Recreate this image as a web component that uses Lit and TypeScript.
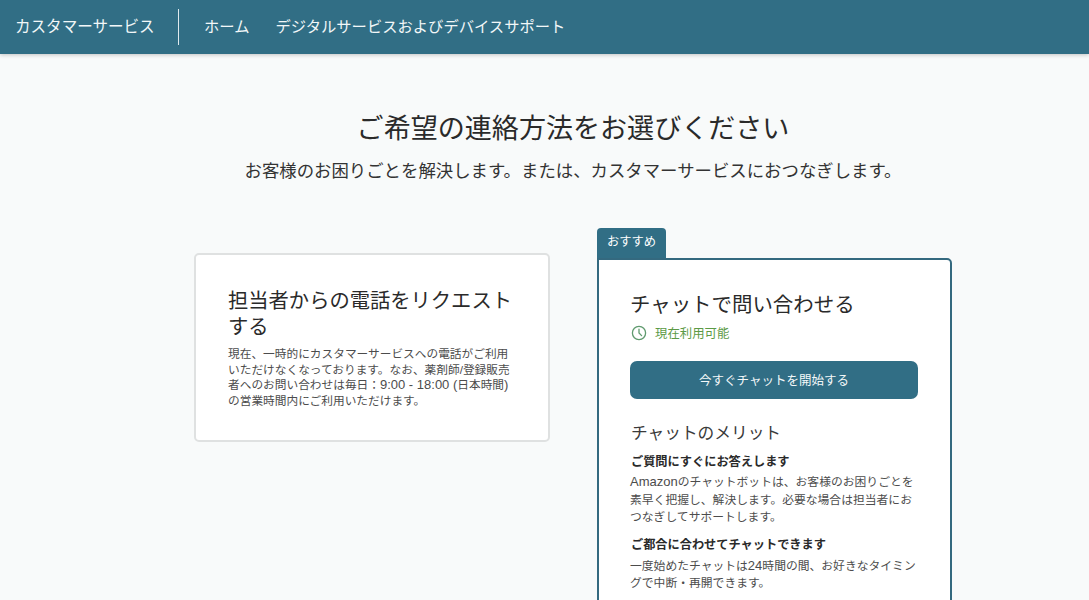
import { LitElement, html, css } from "lit";
import { customElement } from "lit/decorators.js";

@customElement("app-root")
export class AppRoot extends LitElement {
  static styles = css`
    :host {
      display: block;
      height: 600px;
      overflow: hidden;
      background: #f8fafa;
      color: #222;
      font-family: "Liberation Sans", "Noto Sans CJK JP", sans-serif;
    }
    .bar {
      height: 54px;
      background: #316e85;
      box-shadow: 0 1px 4px rgba(0, 0, 0, 0.22);
      display: flex;
      align-items: center;
      color: #f2f7f8;
      font-size: 15.3px;
      padding: 0 0 5px 15px;
      box-sizing: border-box;
      position: relative;
    }
    .brand { width: 139px; white-space: nowrap; font-size: 15.55px; }
    .divider { width: 1px; height: 36px; background: #dfeaee; margin: 5px 25px 0 24px; }
    .home { margin-right: 26px; white-space: nowrap; }
    .crumb { white-space: nowrap; }
    main { width: 758px; margin-left: 194px; }
    h1 {
      margin: 56px 0 0;
      font-size: 27.05px;
      font-weight: 400;
      line-height: 38px;
      text-align: center;
      white-space: nowrap;
      color: #2a2a2a;
    }
    .lead {
      margin: 11px 0 0;
      font-size: 17.4px;
      line-height: 24px;
      text-align: center;
      white-space: nowrap;
      color: #333;
    }
    .cards { display: flex; align-items: flex-start; gap: 47px; margin-top: 58px; }
    .col-left { width: 356px; padding-top: 12px; flex: none; }
    .col-right { width: 355px; flex: none; margin-top: -13px; }
    .card {
      box-sizing: border-box;
      background: #fff;
      border: 2px solid #dfe1e1;
      border-radius: 5px;
    }
    .phone { height: 189px; padding: 33px 32px 0; }
    h2 {
      margin: 0;
      font-size: 20.3px;
      line-height: 26px;
      font-weight: 400;
      color: #2a2a2a;
    }
    .phone p {
      margin: 6px 0 0;
      font-size: 11.7px;
      line-height: 15.6px;
      color: #4c4c4c;
    }
    .lat { display: inline-block; font-size: 13px; line-height: 13px; white-space: pre; }
    .tab {
      width: 69px;
      height: 30px;
      box-sizing: border-box;
      background: #316e85;
      color: #fff;
      border-radius: 4px 4px 0 0;
      font-size: 12.3px;
      line-height: 29px;
      text-align: center;
    }
    .chat {
      border-color: #34697f;
      border-radius: 0 5px 5px 5px;
      padding: 32px 32px 40px;
      height: 400px;
    }
    .chat h2 { margin-left: -1px; font-size: 20.45px; }
    .status {
      display: flex;
      align-items: center;
      gap: 8px;
      margin-top: 6px;
      height: 18px;
      font-size: 12.4px;
      color: #5c9a46;
    }
    .status svg { display: block; flex: none; }
    .cta {
      display: block;
      box-sizing: border-box;
      width: 288px;
      height: 38px;
      margin: 19px 0 0 -1px;
      padding: 0 0 2px;
      border: 0;
      border-radius: 7px;
      background: #316e85;
      color: #f4f8f9;
      font: inherit;
      font-size: 12.5px;
      text-align: center;
    }
    h3 {
      margin: 24px 0 0;
      font-size: 16.7px;
      line-height: 22px;
      font-weight: 400;
      color: #3a3a3a;
    }
    h4 {
      margin: 8px 0 0;
      font-size: 12.2px;
      line-height: 18px;
      font-weight: 700;
      color: #2a2a2a;
    }
    h4.next { margin-top: 9px; }
    .body {
      margin: 3px 0 0 -1px;
      font-size: 11.8px;
      line-height: 17.6px;
      color: #4c4c4c;
    }
    .next + .body { margin-top: 4px; }
  `;

  render() {
    return html`
      <div class="bar">
        <span class="brand">カスタマーサービス</span>
        <span class="divider"></span>
        <span class="home">ホーム</span>
        <span class="crumb">デジタルサービスおよびデバイスサポート</span>
      </div>
      <main>
        <h1>ご希望の連絡方法をお選びください</h1>
        <p class="lead">お客様のお困りごとを解決します。または、カスタマーサービスにおつなぎします。</p>
        <div class="cards">
          <div class="col-left">
            <section class="card phone">
              <h2>担当者からの電話をリクエストする</h2>
              <p>現在、一時的にカスタマーサービスへの電話がご利用いただけなくなっております。なお、薬剤師/登録販売者へのお問い合わせは毎日：<span class="lat">9:00 - 18:00 (</span>日本時間<span class="lat">)</span>の営業時間内にご利用いただけます。</p>
            </section>
          </div>
          <div class="col-right">
            <div class="tab">おすすめ</div>
            <section class="card chat">
              <h2>チャットで問い合わせる</h2>
              <div class="status">
                <svg width="16" height="16" viewBox="0 0 16 16" fill="none" stroke="#5f9a6e" stroke-width="1.3" stroke-linecap="round">
                  <circle cx="8" cy="8" r="6.6"></circle>
                  <path d="M8 4.2V8l2.6 2.6"></path>
                </svg>
                <span>現在利用可能</span>
              </div>
              <button class="cta">今すぐチャットを開始する</button>
              <h3>チャットのメリット</h3>
              <h4>ご質問にすぐにお答えします</h4>
              <p class="body"><span class="lat">Amazon</span>のチャットボットは、お客様のお困りごとを素早く把握し、解決します。必要な場合は担当者におつなぎしてサポートします。</p>
              <h4 class="next">ご都合に合わせてチャットできます</h4>
              <p class="body">一度始めたチャットは<span class="lat">24</span>時間の間、お好きなタイミングで中断・再開できます。</p>
            </section>
          </div>
        </div>
      </main>
    `;
  }
}
